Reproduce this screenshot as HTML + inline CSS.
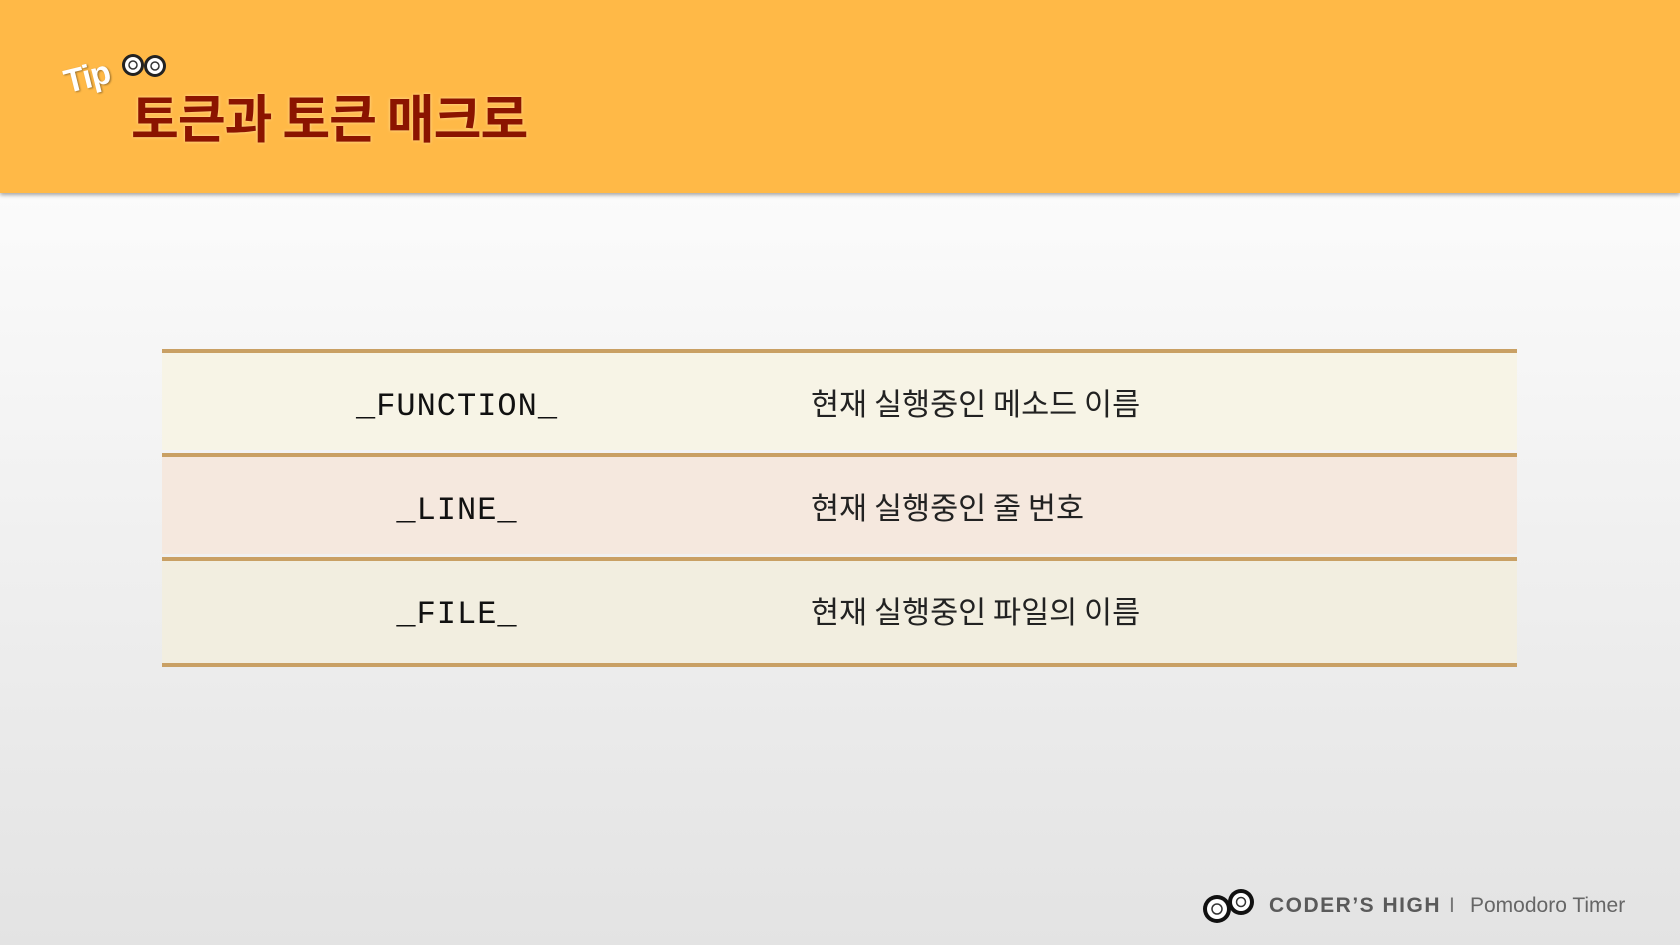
<!DOCTYPE html>
<html><head><meta charset="utf-8"><style>
*{margin:0;padding:0;box-sizing:border-box}
body{width:1680px;height:945px;overflow:hidden;position:relative;font-family:"Liberation Sans","Noto Sans CJK KR",sans-serif;background:linear-gradient(#fbfbfb 193px,#f3f3f3 450px,#e3e3e3 945px)}
.hdr{position:absolute;left:0;top:0;width:1680px;height:193px;background:#ffb947;box-shadow:0 2px 4px rgba(0,0,0,.35)}
.title{position:absolute;left:131px;top:84px;font-size:52px;font-weight:bold;color:#8b1400;font-family:"Noto Sans CJK KR",sans-serif;line-height:64px;letter-spacing:-1px;text-shadow:0 0 3px #ffe0a0}
.tip{position:absolute;left:64px;top:58px;font-size:33px;font-weight:bold;color:#fff;transform:rotate(-14deg);text-shadow:1px 1px 2px rgba(0,0,0,.4);letter-spacing:-1px}
.row{position:absolute;left:162px;width:1355px;height:101px;border-top:4px solid #c9a064}
.row .k{position:absolute;left:0;width:590px;text-align:center;top:35px;font-family:"Liberation Mono",monospace;font-size:32px;color:#111;letter-spacing:1px}
.row .v{position:absolute;left:649px;top:27px;font-size:30.5px;color:#222;font-family:"Noto Sans CJK KR",sans-serif}
.foot{position:absolute;top:894px;font-size:21px;color:#555}
</style></head><body>
<div class="hdr"></div>
<div class="tip">Tip</div>
<svg style="position:absolute;left:120px;top:52px" width="50" height="28"><circle cx="13" cy="13" r="11" fill="#222"/><circle cx="13" cy="13" r="8" fill="#fff"/><circle cx="13" cy="13" r="4" fill="none" stroke="#333" stroke-width="1.5"/><circle cx="35" cy="14" r="11" fill="#222"/><circle cx="35" cy="14" r="8" fill="#fff"/><circle cx="35" cy="14" r="4" fill="none" stroke="#333" stroke-width="1.5"/></svg>
<div class="title">토큰과 토큰 매크로</div>
<div class="row" style="top:349px;background:#f7f4e6"><div class="k">_FUNCTION_</div><div class="v">현재 실행중인 메소드 이름</div></div>
<div class="row" style="top:453px;background:#f5e8de"><div class="k">_LINE_</div><div class="v">현재 실행중인 줄 번호</div></div>
<div class="row" style="top:557px;background:#f2eee0;height:110px;border-bottom:4px solid #c9a064"><div class="k">_FILE_</div><div class="v">현재 실행중인 파일의 이름</div></div>
<svg style="position:absolute;left:1200px;top:885px" width="60" height="40"><circle cx="17" cy="24" r="14" fill="#111"/><circle cx="17" cy="24" r="10" fill="#fff"/><circle cx="17" cy="24" r="5" fill="none" stroke="#333" stroke-width="1.5"/><circle cx="41" cy="17" r="13" fill="#111"/><circle cx="41" cy="17" r="9" fill="#fff"/><circle cx="41" cy="17" r="4.5" fill="none" stroke="#333" stroke-width="1.5"/></svg>
<div class="foot" style="left:1269px;font-weight:bold;letter-spacing:1.5px;color:#5a5a5a">CODER’S HIGH</div>
<div class="foot" style="left:1449px;color:#777">I</div>
<div class="foot" style="left:1470px;color:#666">Pomodoro Timer</div>
</body></html>
